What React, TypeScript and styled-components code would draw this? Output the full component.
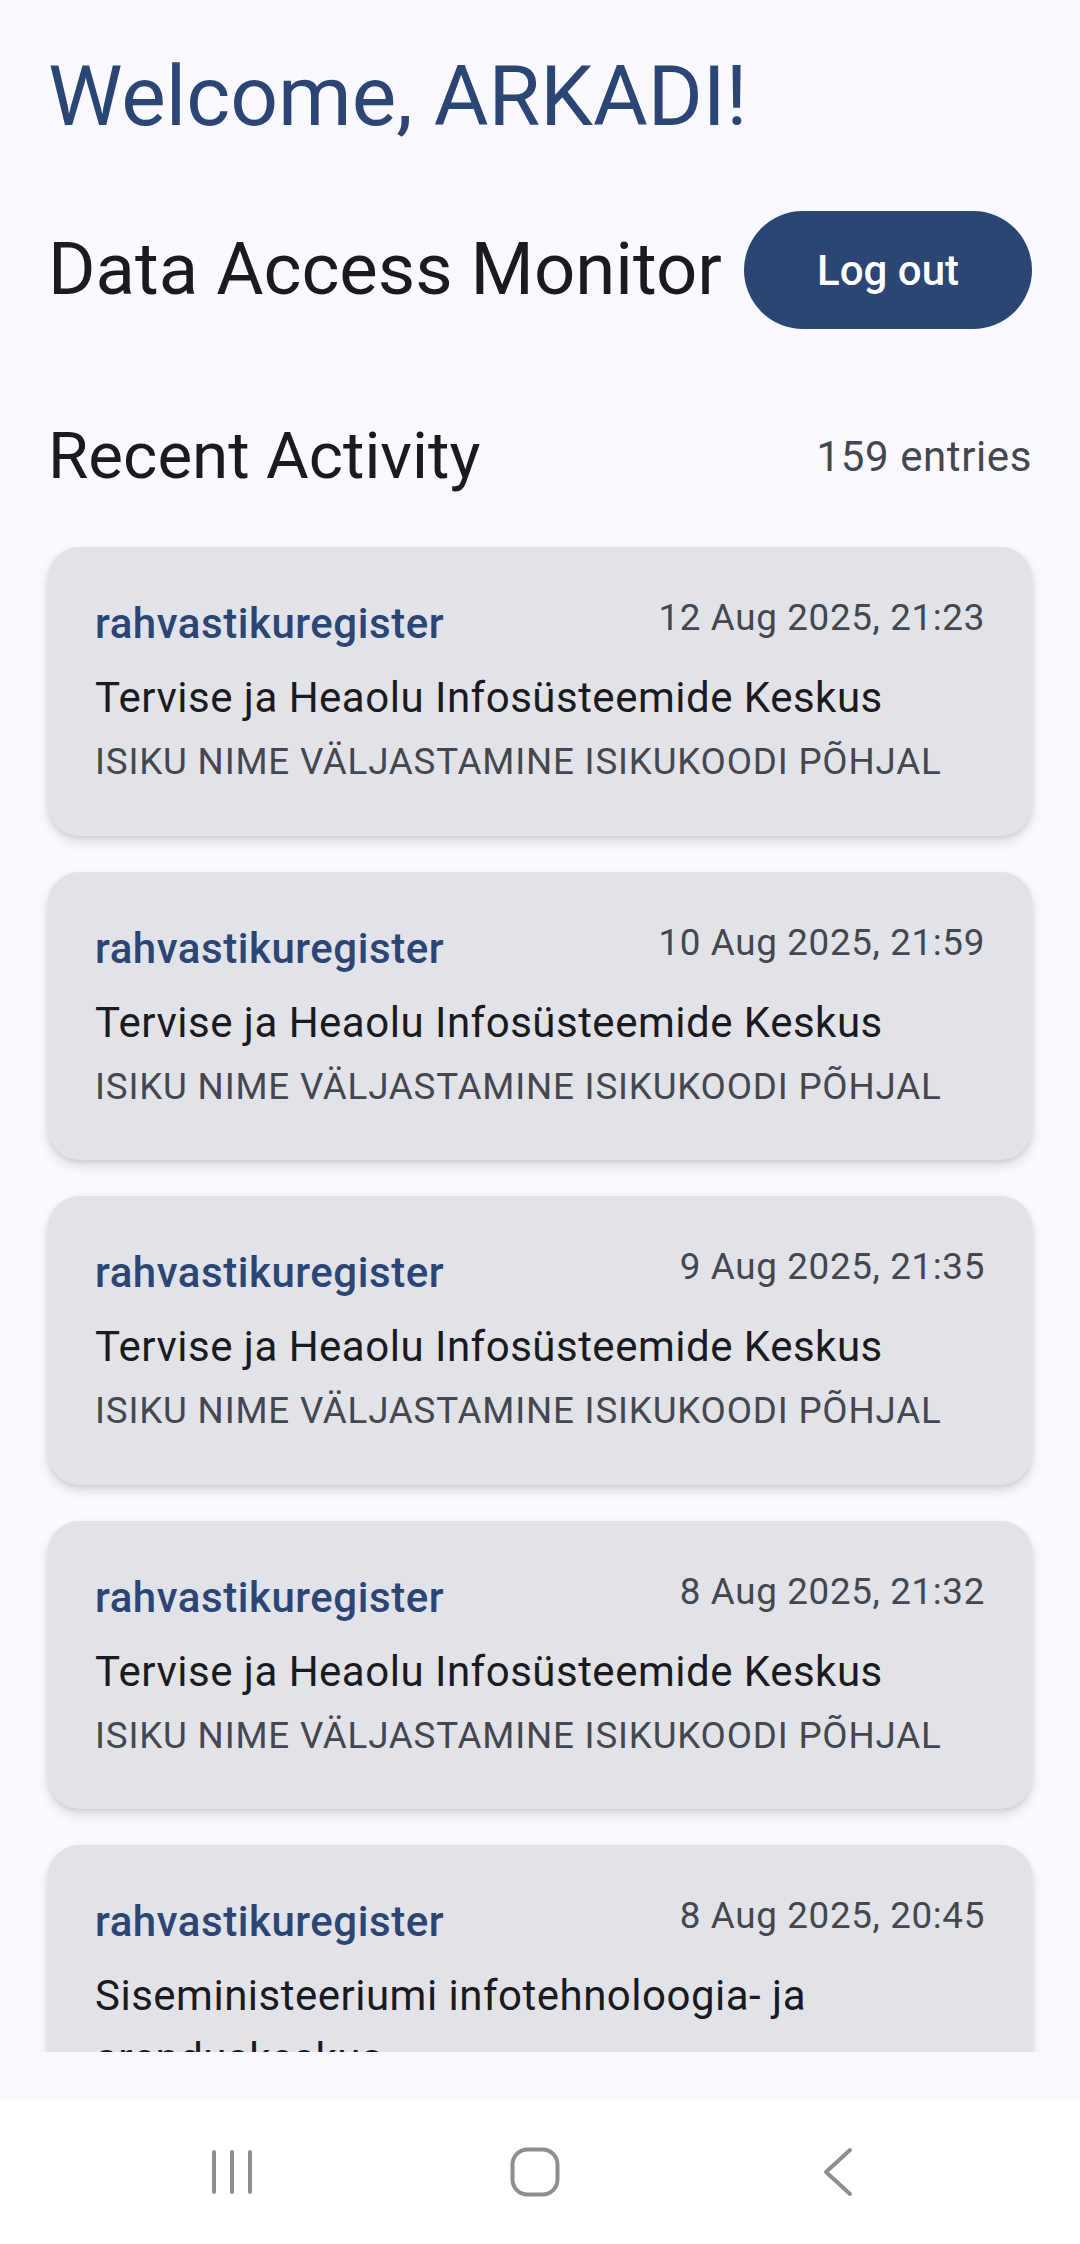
import React from "react";
import styled, { createGlobalStyle } from "styled-components";

const GlobalStyle = createGlobalStyle`
  html, body {
    margin: 0;
    padding: 0;
    background: #f9f9ff;
    font-family: Roboto, "Noto Sans", "Liberation Sans", sans-serif;
    -webkit-font-smoothing: antialiased;
  }
  * { box-sizing: border-box; }
`;

const Screen = styled.div`
  height: 2244px;
  display: flex;
  flex-direction: column;
  background: #f9f9ff;
`;

const Content = styled.main`
  flex: 1;
  min-height: 0;
  overflow: hidden;
  padding: 44px 48px 0;
`;

const Welcome = styled.h1`
  margin: 0;
  font-size: 84px;
  line-height: 105px;
  font-weight: 400;
  color: #2b4574;
`;

const HeaderRow = styled.div`
  margin-top: 62px;
  height: 118px;
  display: flex;
  align-items: center;
  justify-content: space-between;
`;

const AppTitle = styled.h2`
  margin: 0;
  font-size: 72.5px;
  line-height: 94px;
  font-weight: 400;
  color: #1a1b20;
`;

const LogoutButton = styled.button`
  height: 118px;
  padding: 0 73px;
  border: none;
  border-radius: 59px;
  background: #2b4574;
  color: #ffffff;
  font-family: inherit;
  font-size: 42px;
  font-weight: 500;
  letter-spacing: 0;
  cursor: pointer;
`;

const SectionRow = styled.div`
  margin-top: 85px;
  display: flex;
  align-items: center;
  justify-content: space-between;
`;

const SectionTitle = styled.h3`
  margin: 0;
  font-size: 65.5px;
  line-height: 84px;
  font-weight: 400;
  color: #1a1b20;
`;

const Count = styled.span`
  font-size: 42px;
  line-height: 63px;
  color: #44474e;
  letter-spacing: 0.6px;
`;

const List = styled.div`
  margin-top: 49px;
  display: flex;
  flex-direction: column;
  gap: 36px;
`;

const Card = styled.article`
  background: #e2e2e9;
  border-radius: 31.5px;
  padding: 45px 47px 47px;
  box-shadow: 0 6px 12px rgba(0, 0, 0, 0.12), 0 2px 4px rgba(0, 0, 0, 0.08);
`;

const CardTop = styled.div`
  display: flex;
  align-items: flex-start;
  justify-content: space-between;
  gap: 24px;
`;

const Source = styled.span`
  font-size: 42px;
  line-height: 63px;
  font-weight: 500;
  letter-spacing: 0.55px;
  color: #2b4574;
`;

const Stamp = styled.span`
  font-size: 36.75px;
  line-height: 52.5px;
  letter-spacing: 0.66px;
  color: #44474e;
  white-space: nowrap;
`;

const Org = styled.div`
  margin-top: 11px;
  font-size: 42px;
  line-height: 63px;
  letter-spacing: 0.5px;
  color: #1a1b20;
`;

const Operation = styled.div`
  margin-top: 7px;
  font-size: 36.75px;
  line-height: 52.5px;
  letter-spacing: 0.8px;
  color: #44474e;
  text-transform: uppercase;
`;

const BottomGap = styled.div`
  height: 48px;
  flex-shrink: 0;
  background: #f9f9ff;
`;

const NavBar = styled.nav`
  height: 144px;
  flex-shrink: 0;
  background: #ffffff;
  display: flex;
  align-items: center;
  justify-content: center;
  padding-right: 10px;
`;

const NavSlot = styled.div`
  width: 303px;
  display: flex;
  align-items: center;
  justify-content: center;
`;

type Entry = { source: string; date: string; org: string; op: string };

const entries: Entry[] = [
  {
    source: "rahvastikuregister",
    date: "12 Aug 2025, 21:23",
    org: "Tervise ja Heaolu Infosüsteemide Keskus",
    op: "Isiku nime väljastamine isikukoodi põhjal",
  },
  {
    source: "rahvastikuregister",
    date: "10 Aug 2025, 21:59",
    org: "Tervise ja Heaolu Infosüsteemide Keskus",
    op: "Isiku nime väljastamine isikukoodi põhjal",
  },
  {
    source: "rahvastikuregister",
    date: "9 Aug 2025, 21:35",
    org: "Tervise ja Heaolu Infosüsteemide Keskus",
    op: "Isiku nime väljastamine isikukoodi põhjal",
  },
  {
    source: "rahvastikuregister",
    date: "8 Aug 2025, 21:32",
    org: "Tervise ja Heaolu Infosüsteemide Keskus",
    op: "Isiku nime väljastamine isikukoodi põhjal",
  },
  {
    source: "rahvastikuregister",
    date: "8 Aug 2025, 20:45",
    org: "Siseministeeriumi infotehnoloogia- ja arenduskeskus",
    op: "Isiku nime väljastamine isikukoodi põhjal",
  },
];

const RecentsIcon = () => (
  <svg width="44" height="48" viewBox="0 0 44 48" fill="none">
    <g stroke="#8e8e8e" strokeWidth="4" strokeLinecap="round">
      <line x1="4" y1="4" x2="4" y2="44" />
      <line x1="22" y1="4" x2="22" y2="44" />
      <line x1="40" y1="4" x2="40" y2="44" />
    </g>
  </svg>
);

const HomeIcon = () => (
  <svg width="50" height="50" viewBox="0 0 50 50" fill="none">
    <rect x="2.5" y="2.5" width="45" height="45" rx="15" stroke="#8e8e8e" strokeWidth="4" />
  </svg>
);

const BackIcon = () => (
  <svg width="32" height="50" viewBox="0 0 32 50" fill="none">
    <polyline
      points="28,3 4,25 28,47"
      stroke="#8e8e8e"
      strokeWidth="4"
      strokeLinecap="round"
      strokeLinejoin="round"
    />
  </svg>
);

export default function App() {
  return (
    <>
      <GlobalStyle />
      <Screen>
        <Content>
          <Welcome>Welcome, ARKADI!</Welcome>
          <HeaderRow>
            <AppTitle>Data Access Monitor</AppTitle>
            <LogoutButton>Log out</LogoutButton>
          </HeaderRow>
          <SectionRow>
            <SectionTitle>Recent Activity</SectionTitle>
            <Count>159 entries</Count>
          </SectionRow>
          <List>
            {entries.map((e, i) => (
              <Card key={i}>
                <CardTop>
                  <Source>{e.source}</Source>
                  <Stamp>{e.date}</Stamp>
                </CardTop>
                <Org>{e.org}</Org>
                <Operation>{e.op}</Operation>
              </Card>
            ))}
          </List>
        </Content>
        <BottomGap />
        <NavBar>
          <NavSlot>
            <RecentsIcon />
          </NavSlot>
          <NavSlot>
            <HomeIcon />
          </NavSlot>
          <NavSlot>
            <BackIcon />
          </NavSlot>
        </NavBar>
      </Screen>
    </>
  );
}
